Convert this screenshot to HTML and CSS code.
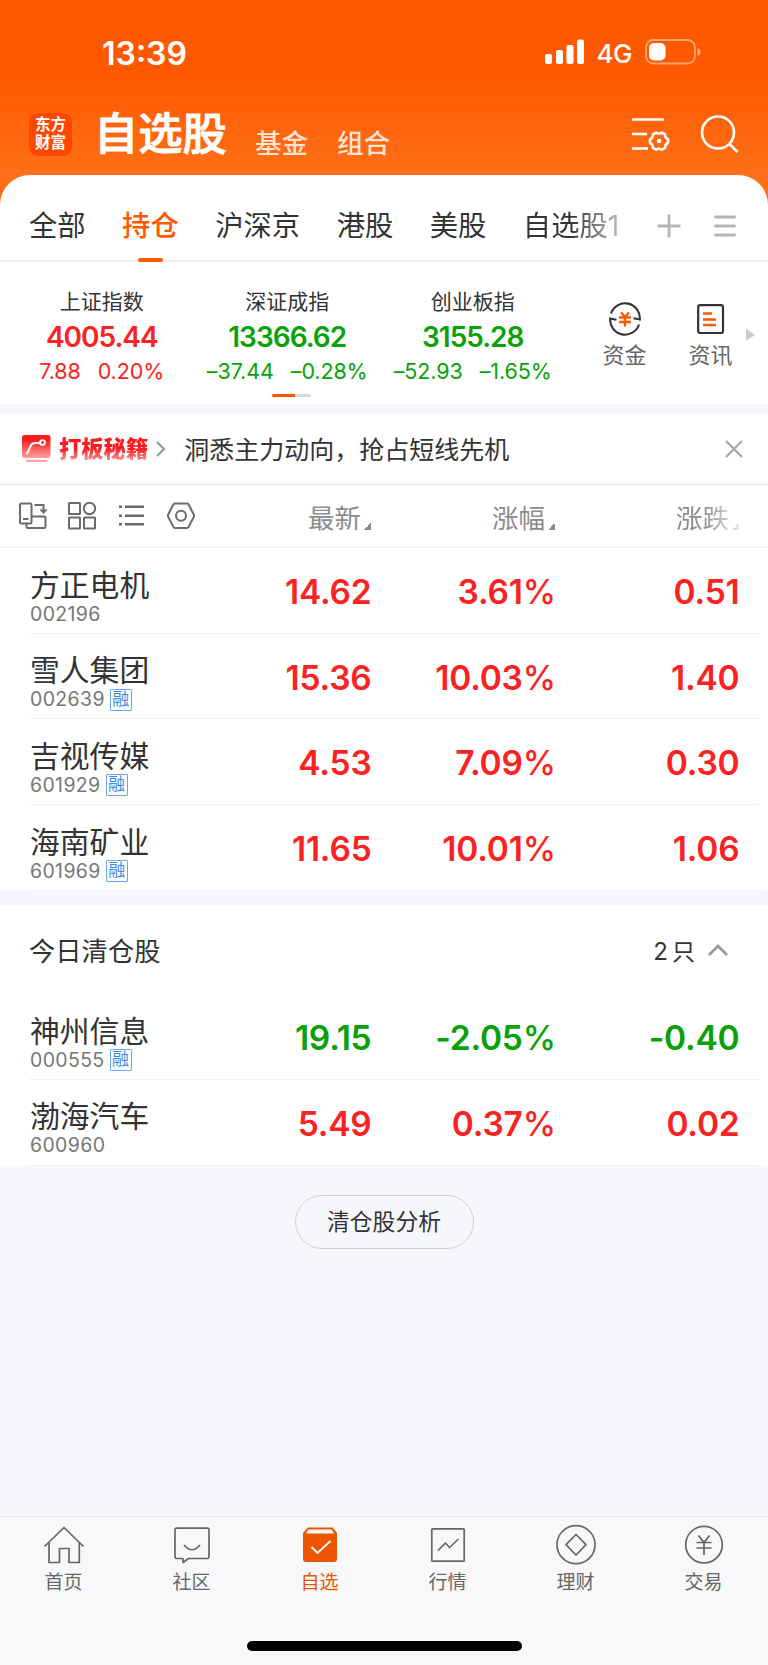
FILE: index.html
```html
<!DOCTYPE html>
<html lang="zh-CN">

<head>
    <meta charset="utf-8">
    <title>自选股</title>
    <link rel="stylesheet" href="styles.css">
</head>

<body>
    <header class="header">
        <div class="status">
            <span class="time">13:39</span>
            <svg class="signal" width="40" height="26" viewBox="0 0 40 26" fill="#fff">
                <rect x="0" y="15" width="7" height="10" rx="2" />
                <rect x="11" y="11" width="7" height="14" rx="2" />
                <rect x="21.5" y="6" width="7" height="19" rx="2" />
                <rect x="32" y="0.5" width="7" height="24.5" rx="2" />
            </svg>
            <span class="net">4G</span>
            <svg class="battery" width="57" height="26" viewBox="0 0 57 26">
                <rect x="1" y="1" width="49" height="23.5" rx="7.5" fill="none" stroke="#fff" stroke-opacity=".45" stroke-width="1.8" />
                <rect x="4" y="4" width="16.5" height="17.5" rx="5" fill="#fff" />
                <path d="M52.5 9q3 1 3 4t-3 4z" fill="#fff" fill-opacity=".5" />
            </svg>
        </div>
        <div class="title-bar">
            <div class="logo">东方<br>财富</div>
            <h1>自选股</h1>
            <span class="sub">基金</span>
            <span class="sub">组合</span>
            <svg class="setting" width="40" height="38" viewBox="0 0 40 38" fill="none" stroke="#fff" stroke-width="2.6">
                <path d="M1 4.5h32M1 19h15M1 33.5h16" />
                <path stroke-linejoin="round" d="M25 17.6q3 1.8 6 0l3 1.8q0 3.4 3 5v3.4q-3 1.6-3 5l-3 1.8q-3-1.8-6 0l-3-1.8q0-3.4-3-5v-3.400q3-1.600 3-5z" />
                <circle cx="28" cy="26" r="2.3" fill="#fff" stroke="none" />
            </svg>
            <svg class="search" width="40" height="40" viewBox="0 0 40 40" fill="none" stroke="#fff" stroke-width="2.6">
                <circle cx="18" cy="18.5" r="16" />
                <path d="M29 29.5l8.5 8.5" />
            </svg>
        </div>
    </header>

    <nav class="tabs">
        <span>全部</span>
        <span class="active">持仓</span>
        <span>沪深京</span>
        <span>港股</span>
        <span>美股</span>
        <span class="fade">自选股1</span>
        <svg class="plus" width="24" height="24" viewBox="0 0 24 24" stroke="#b5b5b5" stroke-width="2.8">
            <path d="M12 .5v23M.5 12h23" />
        </svg>
        <svg class="menu" width="22" height="22" viewBox="0 0 22 22" stroke="#b5b5b5" stroke-width="2.8" stroke-linecap="round">
            <path d="M1.5 2h19M1.5 11h19M1.5 20h19" />
        </svg>
    </nav>

    <section class="indices">
        <div class="index red">
            <div class="index-name">上证指数</div>
            <div class="index-value">4005.44</div>
            <div class="index-change"><span>7.88</span><span>0.20%</span></div>
        </div>
        <div class="index green">
            <div class="index-name">深证成指</div>
            <div class="index-value">13366.62</div>
            <div class="index-change"><span>–37.44</span><span>–0.28%</span></div>
        </div>
        <div class="index green">
            <div class="index-name">创业板指</div>
            <div class="index-value">3155.28</div>
            <div class="index-change"><span>–52.93</span><span>–1.65%</span></div>
        </div>
        <div class="shortcut">
            <svg width="34" height="34" viewBox="0 0 34 34" fill="none" stroke="#333" stroke-width="2.1">
                <path d="M3 11.5A14.8 14.8 0 0 1 31.8 17.5L25.5 16.3" />
                <path d="M31 22.5A14.8 14.8 0 0 1 2.2 16.5L8.5 17.7" />
                <path stroke="#ff5900" stroke-width="2.4" d="M13 10.5l4 4.500 4-4.500M11 15.500h12M11 20h12M17 15v9.500" />
            </svg>
            <span>资金</span>
        </div>
        <div class="shortcut">
            <svg width="34" height="34" viewBox="0 0 34 34" fill="none" stroke="#333" stroke-width="2.2">
                <rect x="4.2" y="3.2" width="24.8" height="27.8" rx="2" />
                <path stroke="#ff5900" stroke-width="2.5" d="M9 11.5h9M9 17.5h13M9 23h13" />
            </svg>
            <span>资讯</span>
        </div>
        <div class="more"></div>
        <div class="pager"></div>
    </section>

    <section class="promo">
        <svg width="30" height="30" viewBox="0 0 30 30">
            <defs>
                <linearGradient id="promoFill" x1="0" y1="0" x2="0" y2="1">
                    <stop offset=".2" stop-color="#fd1b1f" />
                    <stop offset="1" stop-color="#ffa0a0" />
                </linearGradient>
            </defs>
            <rect x="1" y="1" width="28.5" height="23" rx="2.5" fill="url(#promoFill)" />
            <path d="M5.5 20c4-4 2.5-11 9-11h4.500" fill="none" stroke="#fff" stroke-width="2" />
            <circle cx="21.5" cy="8.5" r="2.4" fill="none" stroke="#fff" stroke-width="1.8" />
            <path d="M6 26.8h19.5" stroke="#ffa5a5" stroke-width="2.2" stroke-linecap="round" />
        </svg>
        <span class="promo-tag">打板秘籍</span>
        <svg class="promo-arrow" width="10" height="18" viewBox="0 0 10 18" fill="none" stroke="#999" stroke-width="2.2">
            <path d="M1 2l7 7-7 7" />
        </svg>
        <span class="promo-text">洞悉主力动向，抢占短线先机</span>
        <svg class="close" width="18" height="18" viewBox="0 0 18 18" stroke="#aaa" stroke-width="2.4">
            <path d="M1 1l16 16M17 1L1 17" />
        </svg>
    </section>

    <section class="list-head">
        <div class="tools">
            <svg width="30" height="30" viewBox="0 0 30 30" fill="none" stroke="#6b6b6b" stroke-width="2">
                <rect x="2" y="2.5" width="11.5" height="20" rx="1.5" />
                <path d="M5 18h5.5M16.5 4h9v7M22.500 8.500l3 3 3-3" />
                <path d="M13.5 15.500h12.500q1.500 0 1.500 1.500v8.500q0 1.500-1.500 1.500H10q-1.500 0-1.500-1.500v-3" />
            </svg>
            <svg width="30" height="30" viewBox="0 0 30 30" fill="none" stroke="#6b6b6b" stroke-width="2">
                <rect x="2" y="2" width="11" height="11" rx=".5" />
                <circle cx="22.5" cy="7.500" r="5.700" />
                <rect x="2" y="16.5" width="11" height="11" rx=".5" />
                <rect x="17" y="16.5" width="11" height="11" rx=".5" />
            </svg>
            <svg width="30" height="30" viewBox="0 0 30 30" fill="none" stroke="#6b6b6b" stroke-width="2.6">
                <path d="M3 5.7h3M9 5.7h19M3 14.7h3M9 14.7h19M3 23.2h3M9 23.2h19" />
            </svg>
            <svg width="30" height="30" viewBox="0 0 30 30" fill="none" stroke="#6b6b6b" stroke-width="2" stroke-linejoin="round">
                <path d="M9 2.5h12q1 0 1.5.8l5.3 10.2q.6 1.2 0 2.4L22.500 26q-.5.9-1.500.9H9q-1 0-1.500-.9L2.200 15.900q-.6-1.200 0-2.400L7.500 3.300Q8 2.500 9 2.500z" />
                <circle cx="15" cy="14.7" r="5" />
            </svg>
        </div>
        <div class="head-cell">最新</div>
        <div class="head-cell">涨幅</div>
        <div class="head-cell fade-end">涨跌</div>
    </section>

    <section class="list">
        <div class="row">
            <div class="stock">
                <div class="stock-name">方正电机</div>
                <div class="stock-code">002196</div>
            </div>
            <div class="num red">14.62</div>
            <div class="num red">3.61<i>%</i></div>
            <div class="num red">0.51</div>
        </div>
        <div class="row">
            <div class="stock">
                <div class="stock-name">雪人集团</div>
                <div class="stock-code">002639<b>融</b></div>
            </div>
            <div class="num red">15.36</div>
            <div class="num red">10.03<i>%</i></div>
            <div class="num red">1.40</div>
        </div>
        <div class="row">
            <div class="stock">
                <div class="stock-name">吉视传媒</div>
                <div class="stock-code">601929<b>融</b></div>
            </div>
            <div class="num red">4.53</div>
            <div class="num red">7.09<i>%</i></div>
            <div class="num red">0.30</div>
        </div>
        <div class="row">
            <div class="stock">
                <div class="stock-name">海南矿业</div>
                <div class="stock-code">601969<b>融</b></div>
            </div>
            <div class="num red">11.65</div>
            <div class="num red">10.01<i>%</i></div>
            <div class="num red">1.06</div>
        </div>
    </section>

    <section class="list sold">
        <div class="sold-head">
            <span>今日清仓股</span>
            <span class="count">2<em>只</em></span>
            <svg width="20" height="12" viewBox="0 0 20 12" fill="none" stroke="#999" stroke-width="2.8">
                <path d="M1 11l9-9 9 9" />
            </svg>
        </div>
        <div class="row">
            <div class="stock">
                <div class="stock-name">神州信息</div>
                <div class="stock-code">000555<b>融</b></div>
            </div>
            <div class="num green">19.15</div>
            <div class="num green">-2.05<i>%</i></div>
            <div class="num green">-0.40</div>
        </div>
        <div class="row">
            <div class="stock">
                <div class="stock-name">渤海汽车</div>
                <div class="stock-code">600960</div>
            </div>
            <div class="num red">5.49</div>
            <div class="num red">0.37<i>%</i></div>
            <div class="num red">0.02</div>
        </div>
    </section>

    <button class="analysis">清仓股分析</button>

    <footer class="tabbar">
        <div class="tab-items">
            <a>
                <svg width="42" height="42" viewBox="0 0 42 42" fill="none" stroke="#666" stroke-width="1.7" stroke-linejoin="round">
                    <path d="M1.5 22.5L21 3.5l19.5 19" />
                    <path d="M6 18.5V38.5h10.5V24.5h9.5V38.5H36.300V18.500" />
                </svg>
                首页
            </a>
            <a>
                <svg width="42" height="42" viewBox="0 0 42 42" fill="none" stroke="#666" stroke-width="1.7" stroke-linejoin="round" stroke-linecap="round">
                    <path d="M5.5 4.2h31q1.5 0 1.5 1.5V33q0 1.5-1.5 1.5H17.5l-5.500 4v-4H5.500Q4 34.500 4 33V5.700q0-1.500 1.500-1.500z" />
                    <path d="M13.5 21.5q7.5 8.5 15 0" />
                </svg>
                社区
            </a>
            <a class="on">
                <svg width="42" height="42" viewBox="0 0 42 42" fill="none">
                    <path d="M9 3.5h24.5l4.500 5.500v26q0 3-3 3H7q-3 0-3-3V9z" fill="#ed5600" />
                    <path d="M9.5 5.500h23l2.500 4h-28z" fill="#f8f8fb" />
                    <path d="M12.5 23l6 6L31.5 17" stroke="#fff" stroke-width="1.9" />
                </svg>
                自选
            </a>
            <a>
                <svg width="42" height="42" viewBox="0 0 42 42" fill="none" stroke="#666" stroke-width="1.7" stroke-linejoin="round">
                    <rect x="4.8" y="4.8" width="32.4" height="32.4" rx="1" />
                    <path d="M11 26.5l7.500-7.500 4 4.500L31.500 15" />
                </svg>
                行情
            </a>
            <a>
                <svg width="42" height="42" viewBox="0 0 42 42" fill="none" stroke="#666" stroke-width="1.7" stroke-linejoin="round">
                    <circle cx="21" cy="20.7" r="19" />
                    <path d="M21 10.5L31 20.7 21 31 11 20.7z" />
                </svg>
                理财
            </a>
            <a>
                <svg width="42" height="42" viewBox="0 0 42 42" fill="none" stroke="#666" stroke-width="1.7">
                    <circle cx="21" cy="20.7" r="18.3" />
                    <path d="M15.5 11.500l5.500 7 5.500-7M13.500 18.500h15M13.500 24h15M21 18v13" />
                </svg>
                交易
            </a>
        </div>
        <div class="home-bar"></div>
    </footer>
</body>
</html>
```
FILE: styles.css
```css
html,
body {
    padding: 0;
    margin: 0;
}

* {
    box-sizing: border-box;
}

body {
    display: flex;
    flex-direction: column;
    width: 768px;
    height: 1665px;
    overflow: hidden;
    background-color: #f6f7fa;
    color: #333;
    font-family: Inter, "Noto Sans CJK SC", sans-serif;
}

svg {
    display: block;
    flex: none;
}

.red {
    color: #fa2323;
}

.green {
    color: #07a207;
}

/* header */
.header {
    height: 215px;
    flex: none;
    margin-bottom: -40px;
    background: linear-gradient(#ff5900 75px, #ff7119 180px);
    color: #fff;
}

.status {
    display: flex;
    align-items: center;
    height: 78px;
    padding: 26px 66px 0 102px;
}

.time {
    margin-top: 3px;
    font-size: 32px;
    font-weight: 600;
    line-height: 49px;
}

.signal {
    margin-left: auto;
}

.net {
    margin: 2px 13px 0 12px;
    font-size: 26px;
    font-weight: 500;
    letter-spacing: -0.5px;
}

.title-bar {
    display: flex;
    align-items: center;
    height: 97px;
    padding: 0 28px 0 29px;
}

.logo {
    width: 43px;
    height: 43px;
    margin: 15px 22px 0 0;
    padding-top: 3px;
    border-radius: 9px;
    background-color: #ff4700;
    font-size: 15.5px;
    font-weight: 700;
    line-height: 18px;
    text-align: center;
}

h1 {
    margin: 14px 28px 0 0;
    font-size: 44.3px;
    font-weight: 500;
    line-height: 60px;
    -webkit-text-stroke: 0.9px #fff;
}

.sub {
    margin: 32px 29px 0 0;
    font-size: 26.5px;
    font-weight: 500;
    line-height: 34px;
    opacity: .82;
}

.setting {
    margin: 14px 0 0 auto;
}

.search {
    margin: 14px 0 0 29px;
}

/* group tabs */
.tabs {
    position: relative;
    display: flex;
    align-items: center;
    gap: 36.5px;
    height: 87px;
    flex: none;
    padding: 16px 32px 0 29px;
    border-bottom: 2px solid #f0f0f2;
    border-radius: 30px 30px 0 0;
    background-color: #fff;
    font-size: 28.3px;
    line-height: 40px;
    white-space: nowrap;
}

.tabs .active {
    position: relative;
    color: #ff5900;
    font-weight: 500;
}

.tabs .active::after {
    content: "";
    position: absolute;
    left: 16px;
    bottom: -16px;
    width: 25px;
    height: 4px;
    border-radius: 2px;
    background-color: #ff5900;
}

.tabs .fade {
    background: linear-gradient(to right, #333 50%, #bbb);
    background-clip: text;
    -webkit-background-clip: text;
    color: transparent;
}

.plus {
    margin-left: auto;
}

.menu {
    margin-left: -3px;
}

/* indices */
.indices {
    position: relative;
    display: flex;
    height: 142px;
    flex: none;
    padding-left: 9px;
    background-color: #fff;
}

.index {
    width: 185.5px;
    padding-top: 25px;
    text-align: center;
}

.index-name {
    color: #333;
    font-size: 21px;
    line-height: 30px;
}

.index-value {
    font-size: 28px;
    font-weight: 600;
    letter-spacing: -1px;
    line-height: 40px;
}

.index-change {
    display: flex;
    justify-content: center;
    gap: 17px;
    font-size: 21.5px;
    letter-spacing: -0.1px;
    line-height: 28px;
    white-space: nowrap;
}

.shortcut {
    display: flex;
    flex-direction: column;
    align-items: center;
    width: 86px;
    padding-top: 40px;
    color: #666;
    font-size: 22px;
    line-height: 34px;
}

.index + .shortcut {
    margin-left: 16px;
}

.shortcut span {
    margin-top: 2px;
}

.more {
    position: absolute;
    top: 67px;
    right: 13px;
    border: 6px solid transparent;
    border-left: 9px solid #ccc;
    border-right: 0;
}

.pager {
    position: absolute;
    left: 272px;
    bottom: 7px;
    width: 39px;
    height: 3.5px;
    border-radius: 2px;
    background: linear-gradient(to right, #f55500 60%, #d5d7e0 60%);
}

/* promo */
.promo {
    display: flex;
    align-items: center;
    height: 81px;
    flex: none;
    padding: 0 25px 0 21px;
    border-top: 9px solid #f5f7fa;
    border-bottom: 1px solid #eaeaec;
    background-color: #fff;
}

.promo-tag {
    margin-left: 8px;
    background: linear-gradient(#fd1b1f 50%, #ff9a9a 90%);
    background-clip: text;
    -webkit-background-clip: text;
    color: transparent;
    font-size: 22.3px;
    font-weight: 900;
    line-height: 30px;
}

.promo-arrow {
    margin-left: 8px;
}

.promo-text {
    margin: 2px 0 0 18px;
    font-size: 25px;
    line-height: 36px;
}

.close {
    margin-left: auto;
}

/* list head */
.list-head,
.row {
    display: grid;
    grid-template-columns: 157.5px 184px 184px 184px;
}

.list-head {
    align-items: center;
    grid-template-columns: 169px 184px 184px 184px;
    height: 63px;
    flex: none;
    padding-left: 18px;
    border-bottom: 2px solid #f5f5f7;
    background-color: #fff;
}

.tools {
    display: flex;
    gap: 19.2px;
}

.head-cell {
    display: flex;
    justify-content: flex-end;
    padding: 4px 0 0;
    color: #8c8c8c;
    font-size: 26.5px;
    line-height: 36px;
}

.head-cell::after {
    content: "";
    width: 7px;
    height: 7px;
    margin: 23px 0 0 3px;
    background: linear-gradient(135deg, transparent 50%, #8a8a8f 50%);
}

.fade-end {
    -webkit-mask-image: linear-gradient(to right, #000 80%, rgba(0, 0, 0, .2));
    mask-image: linear-gradient(to right, #000 80%, rgba(0, 0, 0, .2));
}

/* list */
.list {
    flex: none;
    background-color: #fff;
}

.row {
    position: relative;
    height: 85.7px;
    padding-left: 30px;
}

.row::after {
    content: "";
    position: absolute;
    left: 29px;
    right: 9px;
    bottom: 0;
    height: 1px;
    background-color: #f1f2f4;
}

.stock {
    padding-top: 19.5px;
}

.stock-name {
    font-size: 29.8px;
    line-height: 34px;
    white-space: nowrap;
}

.stock-code {
    display: flex;
    align-items: center;
    height: 22px;
    margin-top: 1px;
    color: #777;
    font-size: 19.5px;
    letter-spacing: 0.35px;
}

.stock-code b {
    width: 22px;
    height: 22px;
    margin: 1px 0 0 5px;
    border: 1px solid #6ba8f1;
    border-radius: 1px;
    color: #3c8bea;
    font-size: 17px;
    font-weight: 400;
    letter-spacing: 0;
    line-height: 19px;
    text-align: center;
}

.num {
    padding-top: 1px;
    font-size: 33.5px;
    font-weight: 600;
    letter-spacing: -0.2px;
    line-height: 86px;
    text-align: right;
}

.num i {
    font-style: normal;
    font-weight: 500;
    letter-spacing: -0.5px;
}

.sold {
    margin-top: 14px;
}

.sold-head {
    display: flex;
    align-items: center;
    height: 89.5px;
    padding: 0 40px 0 29px;
    font-size: 26.3px;
}

.count {
    margin: 0 13px 0 auto;
    font-size: 24px;
}

.count em {
    margin-left: 4px;
    font-size: 23px;
    font-style: normal;
}

.analysis {
    align-self: center;
    flex: none;
    width: 179px;
    height: 54px;
    margin-top: 29px;
    padding: 0 0 3px;
    border: 1px solid #d0d1d4;
    border-radius: 27px;
    background: none;
    color: #333;
    font-family: inherit;
    font-size: 22.8px;
}

/* bottom bar */
.tabbar {
    height: 149px;
    flex: none;
    margin-top: auto;
    border-top: 1px solid #e9e9ec;
    background-color: #f8f8fb;
}

.tab-items {
    display: flex;
    height: 124px;
}

.tab-items a {
    display: flex;
    flex-direction: column;
    align-items: center;
    width: 128px;
    padding: 7px 1px 0 0;
    color: #666;
    font-size: 19px;
    line-height: 34px;
}

.tab-items .on {
    color: #ed5600;
}

.home-bar {
    width: 275px;
    height: 9.5px;
    margin: 0 auto;
    border-radius: 5px;
    background-color: #000;
}
```
